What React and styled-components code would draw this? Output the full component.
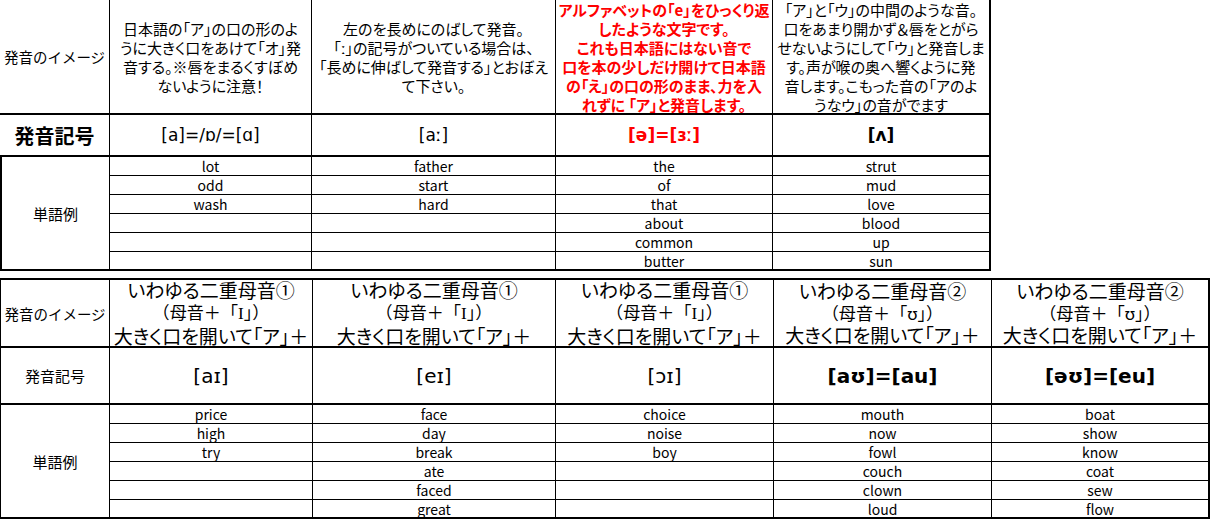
import React from "react";
import styled, { createGlobalStyle, css } from "styled-components";

const Global = createGlobalStyle`
  html, body { margin: 0; padding: 0; background: #fff; }
  body {
    font-family: "Noto Sans CJK JP", "Noto Sans", sans-serif;
    color: #000;
  }
`;

const Page = styled.div`
  display: flex;
  flex-direction: column;
  align-items: flex-start;
  gap: 7px;
  width: 1212px;
  height: 521px;
  overflow: hidden;
  background: #fff;
`;

const Sheet = styled.div`
  display: grid;
  grid-template-columns: ${(p) => p.$cols};
  grid-template-rows: ${(p) => p.$rows};
  border-top: ${(p) => p.$top || 0}px solid #000;
  border-left: ${(p) => p.$left || 0}px solid #000;
`;

const cellBase = css`
  box-sizing: border-box;
  border-right: ${(p) => p.$r ?? 1}px solid #000;
  border-bottom: ${(p) => p.$b ?? 1}px solid #000;
  border-left: ${(p) => p.$l ?? 0}px solid #000;
  display: flex;
  align-items: center;
  justify-content: center;
  overflow: hidden;
  white-space: nowrap;
  min-width: 0;
`;

const RowLabel = styled.div`
  ${cellBase};
  font-size: ${(p) => p.$size || 14.5}px;
  font-weight: ${(p) => (p.$bold ? 700 : 400)};
`;

const Desc = styled.div`
  ${cellBase};
  flex-direction: column;
  font-size: ${(p) => p.$size || 15}px;
  line-height: ${(p) => p.$lh || 19}px;
  color: ${(p) => p.$color || "#000"};
  font-weight: ${(p) => (p.$bold ? 700 : 400)};
  font-feature-settings: "palt";
  text-align: center;
`;

const DescLine = styled.span`
  display: block;
  font-size: ${(p) => (p.$small ? "0.9em" : "1em")};
  font-feature-settings: ${(p) => (p.$wide ? "normal" : "inherit")};
`;

const SerifI = styled.span`
  font-family: "Liberation Serif", "DejaVu Serif", serif;
`;

const Symbol = styled.div`
  ${cellBase};
  font-family: "DejaVu Sans", "Noto Sans", sans-serif;
  font-size: ${(p) => p.$size || 17}px;
  font-weight: ${(p) => (p.$bold ? 700 : 400)};
  color: ${(p) => p.$color || "#000"};
`;

const WordLabel = styled.div`
  ${cellBase};
  grid-row: span 6;
  font-size: 15px;
`;

const Word = styled.div`
  ${cellBase};
  font-size: 14px;
  line-height: 16px;
`;

const topDescs = [
  {
    lines: [
      "日本語の「ア」の口の形のよ",
      "うに大きく口をあけて「オ」発",
      "音する。※唇をまるくすぼめ",
      "ないように注意！",
    ],
  },
  {
    lines: [
      "左のを長めにのばして発音。",
      "「ː」の記号がついている場合は、",
      "「長めに伸ばして発音する」とおぼえ",
      "て下さい。",
    ],
  },
  {
    color: "#ff0000",
    bold: true,
    lines: [
      "アルファベットの「e」をひっくり返",
      "したような文字です。",
      "これも日本語にはない音で",
      "口を本の少しだけ開けて日本語",
      "の「え」の口の形のまま、力を入",
      "れずに 「ア」と発音します。",
    ],
  },
  {
    lines: [
      "「ア」と「ウ」の中間のような音。",
      "口をあまり開かず＆唇をとがら",
      "せないようにして「ウ」と発音しま",
      "す。声が喉の奥へ響くように発",
      "音します。こもった音の「アのよ",
      "うなウ」の音がでます",
    ],
  },
];

const topSymbols = [
  { text: "[a]=/ɒ/=[ɑ]" },
  { text: "[aː]" },
  { text: "[ə]=[ɜː]", bold: true, color: "#ff0000" },
  { text: "[ʌ]", bold: true },
];

const topWords = [
  ["lot", "odd", "wash", "", "", ""],
  ["father", "start", "hard", "", "", ""],
  ["the", "of", "that", "about", "common", "butter"],
  ["strut", "mud", "love", "blood", "up", "sun"],
];

const bottomDescs = [
  { num: "①", mark: "I" },
  { num: "①", mark: "I" },
  { num: "①", mark: "I" },
  { num: "②", mark: "ʊ" },
  { num: "②", mark: "ʊ" },
];

const bottomSymbols = [
  { text: "[aɪ]" },
  { text: "[eɪ]" },
  { text: "[ɔɪ]" },
  { text: "[aʊ]=[au]", bold: true },
  { text: "[əʊ]=[eu]", bold: true },
];

const bottomWords = [
  ["price", "high", "try", "", "", ""],
  ["face", "day", "break", "ate", "faced", "great"],
  ["choice", "noise", "boy", "", "", ""],
  ["mouth", "now", "fowl", "couch", "clown", "loud"],
  ["boat", "show", "know", "coat", "sew", "flow"],
];

function WordRows({ words, labelLeft }) {
  const cells = [];
  cells.push(
    <WordLabel key="label" $b={2} $l={labelLeft}>
      単語例
    </WordLabel>
  );
  for (let r = 0; r < 6; r++) {
    words.forEach((col, c) => {
      cells.push(
        <Word
          key={`${r}-${c}`}
          $b={r === 5 ? 2 : 1}
          $r={c === words.length - 1 ? 2 : 1}
        >
          {col[r]}
        </Word>
      );
    });
  }
  return cells;
}

export default function App() {
  return (
    <>
      <Global />
      <Page>
        <Sheet
          $cols="110px 202px 244px 217px 218px"
          $rows="115px 42px repeat(6, 19px)"
        >
          <RowLabel $b={2}>発音のイメージ</RowLabel>
          {topDescs.map((d, i) => (
            <Desc
              key={i}
              $b={2}
              $r={i === topDescs.length - 1 ? 2 : 1}
              $color={d.color}
              $bold={d.bold}
            >
              {d.lines.map((l, j) => (
                <DescLine key={j}>{l}</DescLine>
              ))}
            </Desc>
          ))}

          <RowLabel $b={2} $size={20} $bold>
            発音記号
          </RowLabel>
          {topSymbols.map((s, i) => (
            <Symbol
              key={i}
              $b={2}
              $r={i === topSymbols.length - 1 ? 2 : 1}
              $bold={s.bold}
              $color={s.color}
            >
              {s.text}
            </Symbol>
          ))}

          {WordRows({ words: topWords, labelLeft: 2 })}
        </Sheet>

        <Sheet
          $cols="109px 203px 243px 218px 218px 218px"
          $rows="68px 57px repeat(6, 19px)"
          $top={2}
          $left={1}
        >
          <RowLabel $b={2}>発音のイメージ</RowLabel>
          {bottomDescs.map((d, i) => (
            <Desc
              key={i}
              $b={2}
              $r={i === bottomDescs.length - 1 ? 2 : 1}
              $size={19}
              $lh={22}
            >
              <DescLine>いわゆる二重母音{d.num}</DescLine>
              <DescLine $small $wide>
                （母音＋「{d.mark === "I" ? <SerifI>I</SerifI> : d.mark}」）
              </DescLine>
              <DescLine>大きく口を開いて「ア」＋</DescLine>
            </Desc>
          ))}

          <RowLabel $b={2} $size={15}>
            発音記号
          </RowLabel>
          {bottomSymbols.map((s, i) => (
            <Symbol
              key={i}
              $b={2}
              $r={i === bottomSymbols.length - 1 ? 2 : 1}
              $bold={s.bold}
              $size={20}
            >
              {s.text}
            </Symbol>
          ))}

          {WordRows({ words: bottomWords, labelLeft: 0 })}
        </Sheet>
      </Page>
    </>
  );
}
